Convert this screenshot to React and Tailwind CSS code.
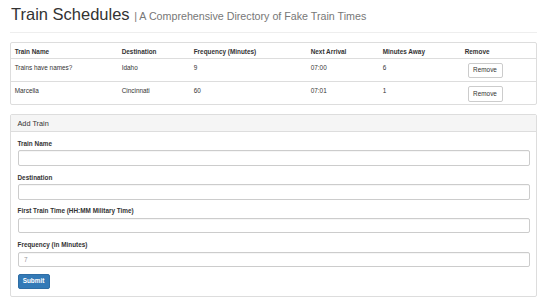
import React from 'react'

const font = { fontFamily: '"Liberation Sans", Arial, sans-serif' }

const trains = [
  { name: 'Trains have names?', dest: 'Idaho', freq: '9', next: '07:00', away: '6' },
  { name: 'Marcella', dest: 'Cincinnati', freq: '60', next: '07:01', away: '1' },
]

const cols = 'grid grid-cols-[107px_72px_117px_72px_82px_75px]'
const cell = 'px-[3.7px] py-[3.7px] leading-[9.2px]'

const Field = ({ label, placeholder }) => (
  <div className="mb-[6.6px]">
    <label className="block font-bold text-[6.4px] leading-[9.2px] mb-[2.3px]">{label}</label>
    <input
      placeholder={placeholder}
      className="block w-full h-[15.6px] px-[5.5px] border border-[#ccc] rounded-[2px] bg-white text-[6.4px] outline-none placeholder:text-[#999] shadow-[inset_0_0.5px_0.5px_rgba(0,0,0,0.075)]"
    />
  </div>
)

export default function App() {
  return (
    <div className="w-[550px] min-h-[308px] bg-white text-[#333] pl-[10px] pr-[13px] text-[6.4px] leading-[9.2px]" style={font}>
      {/* page header */}
      <div className="pt-[5px] pb-[8.5px] border-b border-[#eee]">
        <h1 className="text-[16.5px] leading-[1.1] font-normal pl-[1px]">
          Train Schedules{' '}
          <small className="text-[10.7px] text-[#777]">| A Comprehensive Directory of Fake Train Times</small>
        </h1>
      </div>

      {/* schedule table */}
      <div className="mt-[9.3px] border border-[#ddd] rounded-[2px]">
        <div className={`${cols} font-bold border-b border-[#ddd]`}>
          {['Train Name', 'Destination', 'Frequency (Minutes)', 'Next Arrival', 'Minutes Away', 'Remove'].map((h) => (
            <div key={h} className={`${cell} h-[15px]`}>{h}</div>
          ))}
        </div>
        {trains.map((t, i) => (
          <div key={t.name} className={`${cols} h-[22.5px] ${i > 0 ? 'border-t border-[#ddd]' : ''}`}>
            <div className={cell}>{t.name}</div>
            <div className={cell}>{t.dest}</div>
            <div className={cell}>{t.freq}</div>
            <div className={cell}>{t.next}</div>
            <div className={cell}>{t.away}</div>
            <div className="pl-[6.5px] pt-[3.7px]">
              <button className="block h-[15.4px] w-[35px] border border-[#ccc] rounded-[2px] bg-white text-[6.4px] text-[#333] leading-none">
                Remove
              </button>
            </div>
          </div>
        ))}
      </div>

      {/* add train form */}
      <div className="mt-[9.5px] border border-[#ddd] rounded-[2px]">
        <div className="h-[16.5px] bg-[#f5f5f5] border-b border-[#ddd] px-[6.5px] flex items-center text-[7.3px]">
          Add Train
        </div>
        <div className="px-[6.5px] pt-[7px] pb-[7px]">
          <Field label="Train Name" />
          <Field label="Destination" />
          <Field label="First Train Time (HH:MM Military Time)" />
          <Field label="Frequency (in Minutes)" placeholder="7" />
          <button className="block h-[15px] w-[32px] bg-[#337ab7] border border-[#2e6da4] rounded-[2px] text-white text-[6.4px] font-bold leading-none">
            Submit
          </button>
        </div>
      </div>
    </div>
  )
}
